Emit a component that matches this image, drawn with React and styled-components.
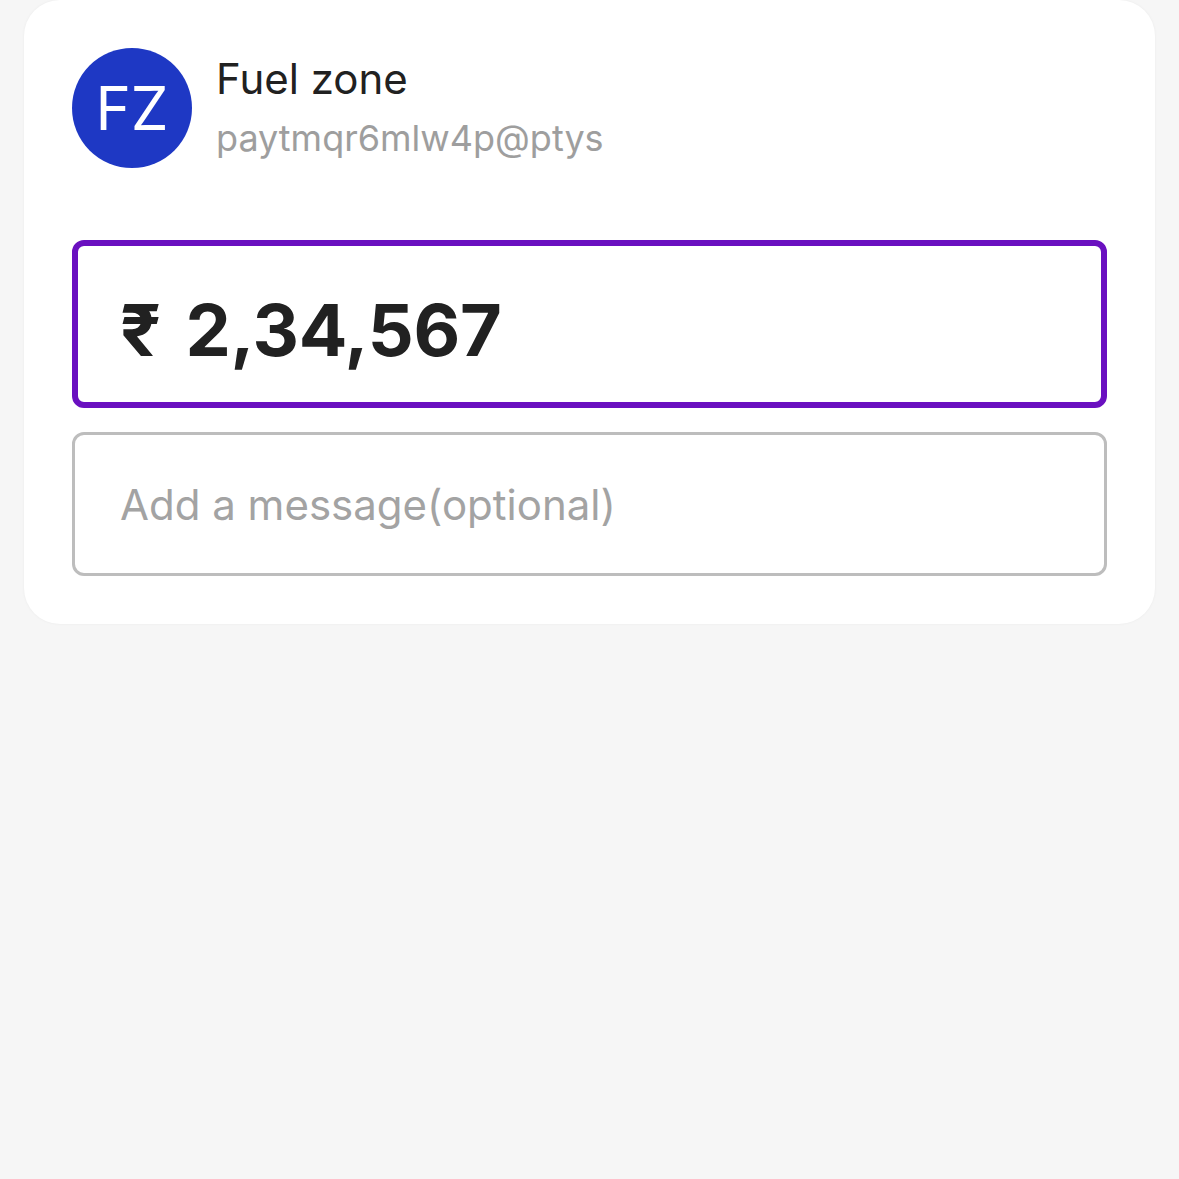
import React from 'react';
import styled, { createGlobalStyle } from 'styled-components';

const GlobalStyle = createGlobalStyle`
  html, body {
    margin: 0;
    padding: 0;
    background: #f6f6f6;
  }
  * {
    box-sizing: border-box;
  }
`;

const Page = styled.div`
  width: 1179px;
  height: 1179px;
  padding: 0 24px;
  background: #f6f6f6;
  font-family: 'Inter', 'Liberation Sans', sans-serif;
  overflow: hidden;
`;

const Card = styled.div`
  display: flex;
  flex-direction: column;
  gap: 24px;
  height: 624px;
  padding: 48px;
  background: #fff;
  border-radius: 36px;
  box-shadow: 0 0 3px rgba(0, 0, 0, 0.05);
`;

const Payee = styled.div`
  display: flex;
  align-items: flex-start;
  gap: 24px;
  height: 168px;
`;

const Avatar = styled.div`
  display: flex;
  align-items: center;
  justify-content: center;
  flex: none;
  width: 120px;
  height: 120px;
  border-radius: 50%;
  background: #1e38c4;
  color: #fff;
  font-size: 60px;
  font-weight: 400;
`;

const PayeeText = styled.div`
  display: flex;
  flex-direction: column;
  gap: 10px;
  padding-top: 6px;
`;

const Name = styled.div`
  font-size: 42px;
  line-height: 50px;
  color: #212121;
`;

const Handle = styled.div`
  font-size: 36px;
  line-height: 48px;
  color: #9e9e9e;
`;

const Field = styled.div`
  display: flex;
  align-items: center;
  height: ${(p) => (p.$active ? '168px' : '144px')};
  padding: 0 ${(p) => (p.$active ? '42px' : '45px')};
  border: ${(p) => (p.$active ? '6px solid #6a10c0' : '3px solid #bdbdbd')};
  border-radius: 12px;
`;

const Amount = styled.span`
  padding-top: 10px;
  font-size: 72px;
  font-weight: 700;
  letter-spacing: -0.35px;
  word-spacing: 8px;
  color: #212121;
`;

const Placeholder = styled.span`
  font-size: 42px;
  color: #a3a3a3;
`;

export default function App() {
  return (
    <Page>
      <GlobalStyle />
      <Card>
        <Payee>
          <Avatar>FZ</Avatar>
          <PayeeText>
            <Name>Fuel zone</Name>
            <Handle>paytmqr6mlw4p@ptys</Handle>
          </PayeeText>
        </Payee>
        <Field $active>
          <Amount>₹ 2,34,567</Amount>
        </Field>
        <Field>
          <Placeholder>Add a message(optional)</Placeholder>
        </Field>
      </Card>
    </Page>
  );
}
